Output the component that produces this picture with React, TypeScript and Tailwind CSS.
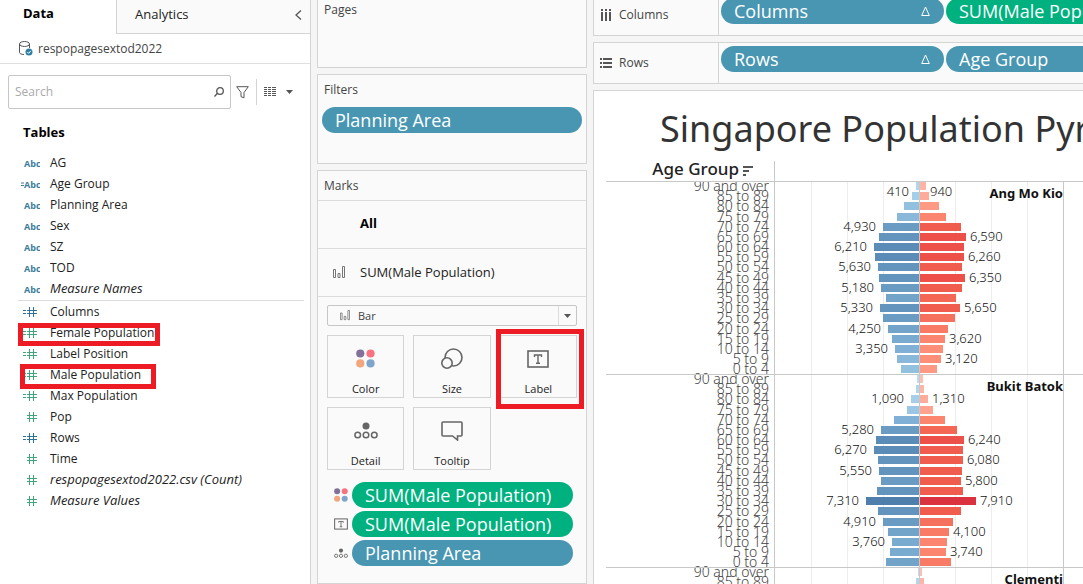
import type { ReactNode } from "react";
import clsx from "clsx";

/* ===== Data ===== */
type Field = { name: string; kind: "abc" | "num"; calc?: boolean; tone?: "blue" | "green"; italic?: boolean; mark?: string };

const dimensions: Field[] = [
  { name: "AG", kind: "abc" },
  { name: "Age Group", kind: "abc", calc: true },
  { name: "Planning Area", kind: "abc" },
  { name: "Sex", kind: "abc" },
  { name: "SZ", kind: "abc" },
  { name: "TOD", kind: "abc" },
  { name: "Measure Names", kind: "abc", italic: true },
];

const measures: Field[] = [
  { name: "Columns", kind: "num", calc: true, tone: "blue" },
  { name: "Female Population", kind: "num", calc: true, mark: "left-0 top-px w-[142px] h-[23px]" },
  { name: "Label Position", kind: "num", calc: true },
  { name: "Male Population", kind: "num", calc: true, mark: "left-0.5 top-0 w-[136px] h-[25px]" },
  { name: "Max Population", kind: "num", calc: true },
  { name: "Pop", kind: "num" },
  { name: "Rows", kind: "num", calc: true, tone: "blue" },
  { name: "Time", kind: "num" },
  { name: "respopagesextod2022.csv (Count)", kind: "num", italic: true },
  { name: "Measure Values", kind: "num", italic: true },
];

const ages = [
  "90 and over", "85 to 89", "80 to 84", "75 to 79", "70 to 74", "65 to 69", "60 to 64", "55 to 59", "50 to 54", "45 to 49",
  "40 to 44", "35 to 39", "30 to 34", "25 to 29", "20 to 24", "15 to 19", "10 to 14", "5 to 9", "0 to 4",
];

type Area = { name: string; male: number[]; female: number[]; maleLabels: Record<number, string>; femaleLabels: Record<number, string> };

// bar lengths are in pixels, one per age band
const areas: Area[] = [
  {
    name: "Ang Mo Kio",
    male: [4, 8, 16, 23, 37, 41, 46, 45, 42, 41, 39, 34, 40, 37, 32, 28, 25, 23, 19],
    female: [6, 9, 19, 26, 41, 46, 44, 44, 42, 45, 42, 36, 40, 35, 28, 25, 23, 21, 17],
    maleLabels: { 0: "410", 4: "4,930", 6: "6,210", 8: "5,630", 10: "5,180", 12: "5,330", 14: "4,250", 16: "3,350" },
    femaleLabels: { 0: "940", 5: "6,590", 7: "6,260", 9: "6,350", 12: "5,650", 15: "3,620", 17: "3,120" },
  },
  {
    name: "Bukit Batok",
    male: [3, 4, 9, 13, 26, 39, 44, 46, 42, 41, 39, 43, 54, 42, 37, 32, 28, 30, 34],
    female: [3, 4, 8, 13, 25, 37, 44, 43, 43, 42, 41, 43, 56, 41, 33, 29, 27, 26, 31],
    maleLabels: { 2: "1,090", 5: "5,280", 7: "6,270", 9: "5,550", 12: "7,310", 14: "4,910", 16: "3,760" },
    femaleLabels: { 2: "1,310", 6: "6,240", 8: "6,080", 10: "5,800", 12: "7,910", 15: "4,100", 17: "3,740" },
  },
  { name: "Clementi", male: [2, 4], female: [2, 4], maleLabels: {}, femaleLabels: {} },
];

const blues = ["#b9ddf1", "#afd6ed", "#a5cfe9", "#9bc7e4", "#92c0df", "#89b8da", "#80b0d5", "#79aacf", "#72a3c9", "#6a9bc3", "#6394be", "#5b8cb8", "#5485b2", "#4e7fac", "#4878a6"];
const reds = ["#ffbeb2", "#ffb4a6", "#ffab9b", "#ffa290", "#fe9984", "#fd8f79", "#fb856e", "#f97b66", "#f6715d", "#f36754", "#f05c4d", "#ec5049", "#e74545", "#e13b42", "#da323f"];

const UI = "font-['Open_Sans','Noto_Sans',sans-serif]";
const VIZ = "font-['Noto_Sans','Open_Sans',sans-serif]";

/* ===== Icons ===== */
function FieldIcon({ field }: { field: Field }) {
  if (field.kind === "abc") {
    return (
      <svg className="w-5 h-4 shrink-0" viewBox="0 0 20 16" fill="#3c7d9a">
        {field.calc && <path d="M1 6.500h3v1H1zM1 9h3v1H1z" />}
        <text x="4" y="12" fontSize="9" fontWeight="700" className={UI}>Abc</text>
      </svg>
    );
  }
  return (
    <svg className="w-5 h-4 shrink-0" viewBox="0 0 20 16" fill={field.tone === "blue" ? "#2f7396" : "#3fa37c"}>
      {field.calc && <path d="M3 6h3v1H3zM3 9h3v1H3z" />}
      <path d="M7 6h10v1H7zM7 9h10v1H7zM9 3h1v10H9zM13 3h1v10h-1z" />
    </svg>
  );
}

function DatabaseIcon() {
  return (
    <svg className="w-[14px] h-[15px]" viewBox="0 0 14 15" fill="none" stroke="#555">
      <path d="M.5 3v8.500c0 1 2 2 4.500 2M10.500 3v4M.5 3c0-3.300 10-3.300 10 0S.5 6.300.5 3z" />
      <circle cx="10" cy="11" r="3.500" fill="#2f7fa3" stroke="none" />
      <path d="M8.300 11l1.300 1.300 2.200-2.400" stroke="#fff" />
    </svg>
  );
}

function BarsIcon({ className }: { className: string }) {
  return (
    <svg className={className} viewBox="0 0 12 13" fill="none" stroke="#777">
      <path d="M.5 3.500h2v8h-2zM5 7.500h2v4H5zM9.500.5h2v11h-2z" />
    </svg>
  );
}

function ColorIcon({ className }: { className: string }) {
  return (
    <svg className={className} viewBox="0 0 20 20">
      <circle cx="4.500" cy="4.700" r="4.300" fill="#83709a" />
      <circle cx="15.300" cy="4.700" r="4.300" fill="#f8727f" />
      <circle cx="4.500" cy="15.200" r="4.300" fill="#f3a57b" />
      <circle cx="15.300" cy="15.200" r="4.300" fill="#80a5cc" />
    </svg>
  );
}

function SizeIcon() {
  return (
    <svg className="w-[22px] h-[22px]" viewBox="0 0 22 22" fill="#fafafa" stroke="#666" strokeWidth="1.600">
      <circle cx="12.500" cy="9.500" r="8.500" />
      <circle cx="6" cy="15" r="5.200" />
    </svg>
  );
}

function LabelIcon({ className }: { className: string }) {
  return (
    <svg className={className} viewBox="0 0 22 18" fill="none" stroke="#666">
      <rect x="1" y="1" width="20" height="16" strokeWidth="1.600" />
      <path d="M7.500 7V5h7v2M11 5v8.500M9 13.300h4" strokeWidth="1.400" />
    </svg>
  );
}

function DetailIcon({ className }: { className: string }) {
  return (
    <svg className={className} viewBox="0 0 24 18" fill="none" stroke="#666" strokeWidth="1.500">
      <circle cx="12" cy="4" r="3.500" fill="#666" stroke="none" />
      <circle cx="3.700" cy="13" r="2.800" />
      <circle cx="12" cy="13" r="2.800" />
      <circle cx="20.300" cy="13" r="2.800" />
    </svg>
  );
}

function TooltipIcon() {
  return (
    <svg className="w-[22px] h-[20px]" viewBox="0 0 22 20" fill="none" stroke="#666" strokeWidth="1.600">
      <path d="M2 1h18q1 0 1 1v12q0 1-1 1h-3.500v4l-5-4H2q-1 0-1-1V2q0-1 1-1z" />
    </svg>
  );
}

function ShelfIcon({ rows }: { rows?: boolean }) {
  return (
    <svg className="w-3 h-3 shrink-0" viewBox="0 0 12 12" fill="#555">
      {rows
        ? <path d="M0 1h2v2H0zM3 1h9v2H3zM0 5h2v2H0zM3 5h9v2H3zM0 9h2v2H0zM3 9h9v2H3z" />
        : <path d="M1 0h2v2H1zM1 3h2v9H1zM5 0h2v2H5zM5 3h2v9H5zM9 0h2v2H9zM9 3h2v9H9z" />}
    </svg>
  );
}

/* ===== Building blocks ===== */
function Pill({ children, green, sorted, className }: { children: ReactNode; green?: boolean; sorted?: boolean; className?: string }) {
  return (
    <button
      type="button"
      className={clsx(
        "flex items-center h-[26px] rounded-full pl-[13px] pr-3.5 text-[18px] text-white whitespace-nowrap text-left",
        green ? "bg-[#00b180]" : "bg-[#4996b2]",
        className
      )}
    >
      <span className="flex-1">{children}</span>
      {sorted && (
        <svg className="w-[9px] h-[10px]" viewBox="0 0 9 10" fill="none" stroke="#fff">
          <path d="M4.500 1L8.300 9.500H.7z" />
        </svg>
      )}
    </button>
  );
}

function FieldRow({ field }: { field: Field }) {
  return (
    <li className="relative flex items-center gap-2 h-[21px] pl-0.5">
      <FieldIcon field={field} />
      <span className={clsx("whitespace-nowrap text-[#222] pl-0.5", field.italic ? "text-[13px] italic" : "text-[12px]")}>{field.name}</span>
      {field.mark && <span className={clsx("absolute border-[5px] border-[#ed1c24]", field.mark)} />}
    </li>
  );
}

function MarkButton({ label, icon, marked }: { label: string; icon: ReactNode; marked?: boolean }) {
  return (
    <button type="button" className="relative flex flex-col items-center h-[63px] border border-[#d4d4d4] text-[11px] leading-4 text-[#222]">
      <span className="flex items-center justify-center h-[46px]">{icon}</span>
      {label}
      {marked && <span className="absolute -left-[5px] -right-2 -top-[7px] -bottom-3 border-[5px] border-[#ed1c24]" />}
    </button>
  );
}

function DataPane() {
  return (
    <aside className="w-[311px] shrink-0 bg-white border-r border-[#d4d4d4]">
      <div className="flex h-[34px]">
        <button type="button" className="w-[116px] pl-[23px] pb-1.5 text-left text-[13px] font-bold text-black">Data</button>
        <button type="button" className="flex flex-1 items-center justify-between pl-[18px] pr-2 pb-1 text-[13px] text-[#222] bg-[#fafafa] border-l border-b border-[#d4d4d4]">
          Analytics
          <svg className="w-[7px] h-[10px]" viewBox="0 0 7 10" fill="none" stroke="#555" strokeWidth="1.300">
            <path d="M6 .5L1 5l5 4.500" />
          </svg>
        </button>
      </div>
      <div className="flex items-center gap-[5px] h-[30px] pl-[19px] text-[12px] text-[#444] border-b border-[#e0e0e0]">
        <DatabaseIcon />
        respopagesextod2022
      </div>
      <div className="flex items-center pt-[11px] pl-2">
        <label className="flex items-center w-[223px] h-[34px] pl-1.5 pr-1.5 border border-[#c6c6c6] rounded-[2px]">
          <input type="text" aria-label="Search" placeholder="Search" className="flex-1 min-w-0 text-[12px] outline-none placeholder:text-[#aaa]" />
          <svg className="w-[10px] h-[10px]" viewBox="0 0 10 10" fill="none" stroke="#555" strokeWidth="1.300">
            <circle cx="6" cy="4" r="3.300" />
            <path d="M3.500 6.300L.5 9.500" />
          </svg>
        </label>
        <button type="button" aria-label="Filter" className="ml-[5px]">
          <svg className="w-[13px] h-[13px]" viewBox="0 0 13 13" fill="none" stroke="#555">
            <path d="M.7.700h11.600L8 6.500v5.300L5 10.700V6.500z" />
          </svg>
        </button>
        <span className="w-px h-[26px] ml-[7px] bg-[#d4d4d4]" />
        <button type="button" aria-label="View" className="flex items-center gap-[10px] ml-[7px]">
          <svg className="w-3 h-[10px]" viewBox="0 0 12 10" fill="#555">
            <path d="M0 0h3v1H0zM4 0h3v1H4zM8 0h4v1H8zM0 2h3v1H0zM4 2h3v1H4zM8 2h4v1H8zM0 4h3v1H0zM4 4h3v1H4zM8 4h4v1H8zM0 6h3v1H0zM4 6h3v1H4zM8 6h4v1H8zM0 8h3v1H0zM4 8h3v1H4zM8 8h4v1H8z" />
          </svg>
          <svg className="w-[7px] h-1" viewBox="0 0 7 4" fill="#555"><path d="M0 0h7L3.500 4z" /></svg>
        </button>
      </div>
      <h2 className="pt-3.5 pl-[23px] h-[43px] text-[13px] font-bold text-black">Tables</h2>
      <ul className="ml-[18px] mr-1.5 pb-px border-b border-[#dcdcdc]">
        {dimensions.map((f) => <FieldRow key={f.name} field={f} />)}
      </ul>
      <ul className="ml-[18px] mr-1.5">
        {measures.map((f) => <FieldRow key={f.name} field={f} />)}
      </ul>
    </aside>
  );
}

function Cards() {
  const card = "bg-[#fafafa] border border-[#d4d4d4]";
  return (
    <div className="flex flex-col gap-1.5 w-[270px] shrink-0 ml-1.5">
      <section className={clsx(card, "h-[68px] border-t-0")}>
        <h3 className="pl-1.5 leading-5 text-[12px] text-[#444]">Pages</h3>
      </section>
      <section className={clsx(card, "h-[90px] px-1")}>
        <h3 className="pl-0.5 h-8 leading-[30px] text-[12px] text-[#444]">Filters</h3>
        <Pill className="w-full">Planning Area</Pill>
      </section>
      <section className={clsx(card, "flex-1")}>
        <h3 className="pl-1.5 h-[29px] leading-[30px] text-[12px] text-[#444]">Marks</h3>
        <button type="button" className="flex items-center w-full h-[49px] pl-[42px] pb-0.5 border-y border-[#dcdcdc] text-[13px] font-bold text-black">All</button>
        <button type="button" className="flex items-center w-full h-12 pl-[15px] gap-[15px] border-b border-[#dcdcdc] text-[13px] text-[#222]">
          <BarsIcon className="w-3 h-[13px]" />
          SUM(Male Population)
        </button>
        <div className="flex items-center mt-2 mx-[9px] h-[21px] border border-[#c6c6c6] rounded-[2px]">
          <BarsIcon className="w-[10px] h-[11px] ml-3" />
          <select aria-label="Mark type" className="appearance-none flex-1 pl-2 text-[11px] leading-4 text-[#444] outline-none">
            <option>Bar</option>
          </select>
          <span className="flex items-center justify-center w-[18px] h-full border-l border-[#dcdcdc]">
            <svg className="w-[7px] h-1" viewBox="0 0 7 4" fill="#555"><path d="M0 0h7L3.500 4z" /></svg>
          </span>
        </div>
        <div className="grid grid-cols-3 gap-[9px] mt-[9px] mx-[9px]">
          <MarkButton label="Color" icon={<ColorIcon className="w-[19px] h-[19px]" />} />
          <MarkButton label="Size" icon={<SizeIcon />} />
          <MarkButton label="Label" icon={<LabelIcon className="w-[22px] h-[18px]" />} marked />
          <MarkButton label="Detail" icon={<DetailIcon className="w-6 h-[18px]" />} />
          <MarkButton label="Tooltip" icon={<TooltipIcon />} />
        </div>
        <div className="flex flex-col gap-[3px] mt-3 ml-4 mr-[13px]">
          <div className="flex items-center gap-1">
            <ColorIcon className="w-[14px] h-[14px]" />
            <Pill green className="flex-1">SUM(Male Population)</Pill>
          </div>
          <div className="flex items-center gap-1">
            <LabelIcon className="w-[14px] h-3" />
            <Pill green className="flex-1">SUM(Male Population)</Pill>
          </div>
          <div className="flex items-center gap-1">
            <DetailIcon className="w-[14px] h-[11px]" />
            <Pill className="flex-1">Planning Area</Pill>
          </div>
        </div>
      </section>
    </div>
  );
}

function Shelf({ label, rows, children }: { label: string; rows?: boolean; children: ReactNode }) {
  return (
    <div className="flex h-[42px] shrink-0 bg-[#fafafa] border border-r-0 border-[#d4d4d4]">
      <div className="flex items-center gap-[7px] w-[125px] shrink-0 pl-1.5 text-[12px] text-[#444] border-r border-[#d4d4d4]">
        <ShelfIcon rows={rows} />
        {label}
      </div>
      <div className="flex gap-0.5 pt-[3px] pl-0.5">{children}</div>
    </div>
  );
}

/* ===== Population pyramid ===== */
const PANE = 193;
const MID = 313;

function Pyramid() {
  return (
    <svg className={clsx("w-full h-[600px] block", VIZ)} shapeRendering="crispEdges">
      {[205, 241, 277, 349, 385, 421].map((x) => (
        <rect key={x} x={x} y="0" width="1" height="600" fill="#ededed" />
      ))}
      {areas.map((area, a) => {
        const top = a * PANE;
        const rowY = (i: number) => top + 1 + Math.round(i * 10.18);
        // the first band's label drops a little so that it stays inside the pane
        const labelY = (i: number) => rowY(i) + (i === 0 ? 14 : 8);
        return (
          <g key={area.name}>
            {ages.map((age, i) => (
              <text key={age} x="163" y={rowY(i) + 9} textAnchor="end" fontSize="14" fontWeight="300" fill="#444">{age}</text>
            ))}
            {area.male.map((w, i) => (
              <rect key={i} x={MID - w + 1} y={rowY(i)} width={w} height="8" fill={blues[Math.floor(w / 4)]} />
            ))}
            {area.female.map((w, i) => (
              <rect key={i} x={MID + 1} y={rowY(i)} width={w} height="8" fill={reds[Math.floor(w / 4)]} />
            ))}
            {Object.entries(area.maleLabels).map(([i, t]) => (
              <text key={i} x={MID - area.male[+i] - 6} y={labelY(+i)} textAnchor="end" fontSize="13" fontWeight="300" fill="#111">{t}</text>
            ))}
            {Object.entries(area.femaleLabels).map(([i, t]) => (
              <text key={i} x={MID + area.female[+i] + 5} y={labelY(+i)} fontSize="13" fontWeight="300" fill="#111">{t}</text>
            ))}
            <text x="457" y={top + 17} textAnchor="end" fontSize="13" fontWeight="700" fill="#111">{area.name}</text>
            <rect x="0" y={top} width="100%" height="1" fill="#c8c8c8" />
          </g>
        );
      })}
      <rect x="168" y="0" width="1" height="600" fill="#c8c8c8" />
      <rect x={MID} y="0" width="1" height="600" fill="#c8c8c8" />
      <rect x="457" y="0" width="1" height="600" fill="#c8c8c8" />
    </svg>
  );
}

export default function App() {
  return (
    <div className={clsx("flex h-screen overflow-hidden bg-[#f5f5f5]", UI)}>
      <DataPane />
      <Cards />
      <main className="flex flex-1 flex-col gap-1.5 min-w-0 ml-1.5 -mt-1.5 overflow-hidden">
        <Shelf label="Columns">
          <Pill sorted className="w-[223px]">Columns</Pill>
          <Pill green className="w-[223px]">SUM(Male Population)</Pill>
        </Shelf>
        <Shelf label="Rows" rows>
          <Pill sorted className="w-[223px]">Rows</Pill>
          <Pill className="w-[223px]">Age Group</Pill>
        </Shelf>
        <section className="flex-1 min-h-0 overflow-hidden bg-white border border-r-0 border-b-0 border-[#d4d4d4]">
          <h1 className={clsx("pl-[66px] h-[70px] leading-[76px] text-[36px] whitespace-nowrap text-[#333]", VIZ)}>
            Singapore Population Pyramid
          </h1>
          <div className="ml-3">
            <div className={clsx("flex items-center justify-end gap-1 w-[169px] h-5 pb-1 pr-[21px] border-r border-[#c8c8c8] text-[17px] font-medium text-[#222]", VIZ)}>
              Age Group
              <svg className="w-[10px] h-[10px] mt-1" viewBox="0 0 10 10" fill="#555">
                <path d="M0 0h10v2H0zM0 4h6v2H0zM0 8h3v2H0z" />
              </svg>
            </div>
            <Pyramid />
          </div>
        </section>
      </main>
    </div>
  );
}
